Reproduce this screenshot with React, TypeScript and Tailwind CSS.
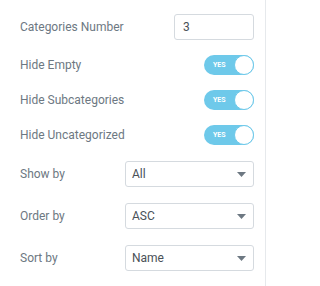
const FONT = { fontFamily: 'Roboto, "Liberation Sans", sans-serif' };

function Toggle() {
  return (
    <div className="relative flex h-[20px] w-[50px] items-center rounded-full bg-[#6ec9ea]">
      <span className="pl-[9px] text-[7px] font-bold leading-none text-white">YES</span>
      <span className="absolute right-0 top-0 h-[20px] w-[20px] rounded-full border-[1.5px] border-[#6ec9ea] bg-white" />
    </div>
  );
}

function Select({ value }: { value: string }) {
  return (
    <div className="flex h-[26px] w-[129px] items-center justify-between rounded-[3px] border border-[#d5dadf] pl-[6px] pr-[7px]">
      <span className="text-[12px] text-[#495157]">{value}</span>
      <svg width="9" height="5" viewBox="0 0 9 5">
        <path d="M0 0h9L4.5 5z" fill="#6d7882" />
      </svg>
    </div>
  );
}

function Row({ label, children }: { label: string; children: React.ReactNode }) {
  return (
    <div className="flex items-center justify-between">
      <span className="text-[12px] text-[#6d7882]">{label}</span>
      {children}
    </div>
  );
}

export default function App() {
  return (
    <div className="h-[286px] w-[267px] bg-white" style={FONT}>
      <div className="h-full w-[266px] border-r border-[#e6e9ec] pl-[20px] pr-[11px] pt-[14px]">
        <Row label="Categories Number">
          <div className="flex h-[26px] w-[80px] items-center rounded-[3px] border border-[#d5dadf] pl-[8px] text-[12px] text-[#495157]">
            3
          </div>
        </Row>
        <div className="mt-[15px] flex flex-col gap-[15px]">
          <Row label="Hide Empty"><Toggle /></Row>
          <Row label="Hide Subcategories"><Toggle /></Row>
          <Row label="Hide Uncategorized"><Toggle /></Row>
        </div>
        <div className="mt-[16px] flex flex-col gap-[16px]">
          <Row label="Show by"><Select value="All" /></Row>
          <Row label="Order by"><Select value="ASC" /></Row>
          <Row label="Sort by"><Select value="Name" /></Row>
        </div>
      </div>
    </div>
  );
}
